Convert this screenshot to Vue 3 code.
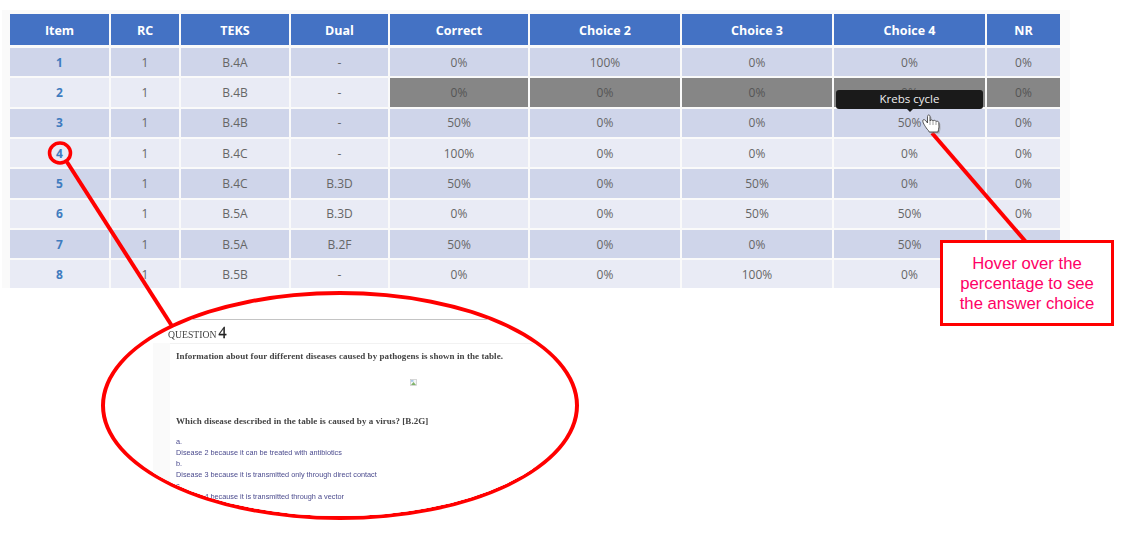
<script setup>
const headers = ['Item', 'RC', 'TEKS', 'Dual', 'Correct', 'Choice 2', 'Choice 3', 'Choice 4', 'NR']
const rows = [
  ['1', '1', 'B.4A', '-', '0%', '100%', '0%', '0%', '0%'],
  ['2', '1', 'B.4B', '-', '0%', '0%', '0%', '0%', '0%'],
  ['3', '1', 'B.4B', '-', '50%', '0%', '0%', '50%', '0%'],
  ['4', '1', 'B.4C', '-', '100%', '0%', '0%', '0%', '0%'],
  ['5', '1', 'B.4C', 'B.3D', '50%', '0%', '50%', '0%', '0%'],
  ['6', '1', 'B.5A', 'B.3D', '0%', '0%', '50%', '50%', '0%'],
  ['7', '1', 'B.5A', 'B.2F', '50%', '0%', '0%', '50%', '0%'],
  ['8', '1', 'B.5B', '-', '0%', '0%', '100%', '0%', '0%']
]
function cellClass(r, c) {
  return {
    odd: r % 2 === 0,
    even: r % 2 === 1,
    item: c === 0,
    dim: r === 1 && c >= 4
  }
}
const hand = 'M927 129 C925 126 922 122 923 120 C924 119 925 120 926 121 L927.500 123 L927.500 116.500 C927.500 114.500 930 114.500 930 116.500 L930 121 C930.500 119.500 932.500 119.500 933 121 C933.500 120 935.500 120 936 121.500 C936.500 121 938.500 121 938.800 122.500 L939 127 C939 129 938 130 938 132 L929 132 C929 131 928 130 927 129 Z'
</script>

<template>
  <div class="page">
    <div class="panel">
      <div class="table">
        <div v-for="h in headers" :key="h" class="head"><span>{{ h }}</span></div>
        <template v-for="(row, r) in rows" :key="r">
          <div v-for="(v, c) in row" :key="c" class="cell" :class="cellClass(r, c)">
            {{ v }}
            <div v-if="r === 2 && c === 7" class="tip">Krebs cycle</div>
          </div>
        </template>
      </div>
    </div>

    <svg class="marks" width="1123" height="538" viewBox="0 0 1123 538" fill="none">
      <ellipse cx="60" cy="153" rx="10.500" ry="10" stroke="#f00" stroke-width="3.500" />
      <path d="M67 162 L172 326" stroke="#f00" stroke-width="4" />
      <path d="M932 133 L1026 242" stroke="#f00" stroke-width="4" />
      <path :d="hand" fill="#8f8f8f" opacity="0.600" transform="translate(1.500 1.500)" />
      <path :d="hand" fill="#fff" stroke="#444" stroke-width="0.900" />
      <path d="M930 121 V125 M933 121 V125 M936 121.500 V125" stroke="#777" stroke-width="0.700" />
    </svg>

    <div class="lens">
      <div class="qhead">
        <span class="qword">Question</span> <span class="qnum">4</span>
      </div>
      <div class="gutter">
        <div class="qcard">
          <p class="stem">Information about four different diseases caused by pathogens is shown in the table.</p>
          <div class="figure">
            <svg width="7" height="7" viewBox="0 0 7 7">
              <rect x="0.500" y="0.500" width="6" height="6" fill="#f4f6f8" stroke="#c8c8c8" stroke-width="0.700" />
              <path d="M1 6 L3.500 3 L6 6 Z" fill="#7fb36a" />
              <rect x="1" y="1" width="2.500" height="1.800" fill="#a9c9e8" />
            </svg>
          </div>
          <p class="stem ask">Which disease described in the table is caused by a virus? [B.2G]</p>
          <div class="choices">
            <div>a.</div>
            <div>Disease 2 because it can be treated with antibiotics</div>
            <div>b.</div>
            <div>Disease 3 because it is transmitted only through direct contact</div>
            <div>c.</div>
            <div>Disease 4 because it is transmitted through a vector</div>
          </div>
        </div>
      </div>
    </div>

    <div class="callout">Hover over the percentage to see the answer choice</div>
  </div>
</template>

<style>
html, body { margin: 0; background: #fff; }
</style>

<style scoped>
.page {
  position: relative;
  width: 1123px;
  height: 538px;
  overflow: hidden;
  background: #fff;
  font-family: "Open Sans", "Liberation Sans", sans-serif;
}
.panel {
  box-sizing: border-box;
  width: 1068px;
  margin: 10px 0 0 2px;
  padding: 4px 10px 0 8px;
  background: #fafafa;
}
.table {
  display: grid;
  grid-template-columns: 99px 68px 108px 97px 138px 150px 150px 151px 73px;
  grid-template-rows: 32px repeat(7, 28.330px) 27.700px;
  column-gap: 2px;
  row-gap: 2px;
}
.head {
  display: flex;
  align-items: center;
  justify-content: center;
  margin-bottom: 1px;
  padding-top: 2px;
  box-sizing: border-box;
  background: #4472c4;
  color: #fff;
  font-size: 12.500px;
  font-weight: 700;
}
.cell {
  position: relative;
  display: flex;
  align-items: center;
  justify-content: center;
  color: #666;
  font-size: 12px;
}
.odd { background: #cfd5ea; }
.even { background: #e9ebf5; }
.item { color: #3f7cbf; font-weight: 700; }
.dim { background: #868686; color: #555; }
.tip {
  position: absolute;
  left: 2px;
  top: -19px;
  box-sizing: border-box;
  width: 147px;
  height: 19px;
  padding-bottom: 1px;
  display: flex;
  align-items: center;
  justify-content: center;
  border-radius: 3px;
  background: #1a1a1a;
  color: #eee;
  font-size: 11.500px;
}
.tip::after {
  content: "";
  position: absolute;
  left: 71px;
  bottom: -3px;
  border-left: 3px solid transparent;
  border-right: 3px solid transparent;
  border-top: 3px solid #1a1a1a;
}
.marks { position: absolute; left: 0; top: 0; }
.lens {
  position: absolute;
  left: 101px;
  top: 291px;
  box-sizing: border-box;
  width: 478px;
  height: 229px;
  border: 4.500px solid #f00;
  border-radius: 50%;
  background: #fff;
  overflow: hidden;
}
.qhead {
  box-sizing: border-box;
  width: 336px;
  height: 24px;
  margin: 23.500px 0 0 63px;
  border-top: 1px solid #c4c4c4;
  font-family: "Liberation Serif", serif;
  line-height: 26px;
  white-space: nowrap;
  filter: blur(0.300px);
}
.qword { font-size: 9.700px; font-variant: small-caps; text-transform: uppercase; color: #444; }
.qnum { margin-left: -2px; font-size: 16px; color: #222; -webkit-text-stroke: 0.300px #222; }
.gutter {
  box-sizing: border-box;
  width: 380px;
  height: 180px;
  margin-left: 48px;
  padding-left: 17px;
  background: #fafafa;
}
.qcard {
  height: 180px;
  padding: 6px 0 0 6px;
  background: #fff;
  border-top: 1px solid #f2f2f2;
  font-family: "Liberation Serif", serif;
  filter: blur(0.300px);
}
.stem {
  margin: 0;
  height: 12px;
  font-size: 9px;
  line-height: 12px;
  font-weight: 700;
  letter-spacing: 0.060px;
  color: #444;
  white-space: nowrap;
}
.figure {
  display: flex;
  height: 7px;
  margin-top: 17px;
  padding-left: 234px;
}
.ask { margin-top: 29px; }
.choices {
  margin-top: 10.500px;
  font-family: "Liberation Sans", sans-serif;
  font-size: 7.300px;
  line-height: 10.900px;
  color: #4b4b8e;
  white-space: nowrap;
}
.callout {
  position: absolute;
  left: 940px;
  top: 240px;
  box-sizing: border-box;
  width: 174px;
  height: 86px;
  display: flex;
  align-items: center;
  justify-content: center;
  padding: 2px 8px 0;
  border: 3px solid #f00;
  background: #fff;
  color: #ff0066;
  font-family: "Liberation Sans", sans-serif;
  font-size: 16.700px;
  line-height: 20px;
  text-align: center;
}
</style>
